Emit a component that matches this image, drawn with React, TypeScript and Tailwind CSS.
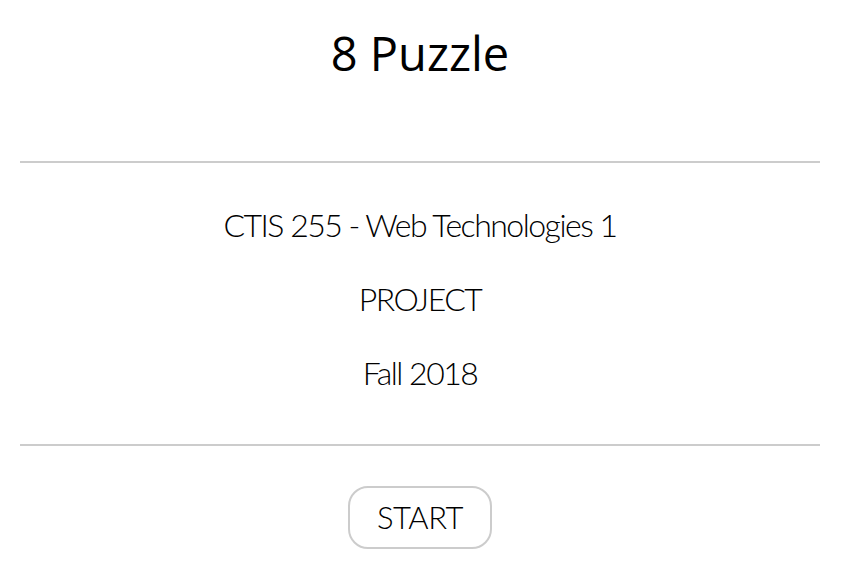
export default function App() {
  return (
    <div className="min-h-screen bg-white text-black">
      <div className="flex w-[840px] flex-col items-center">
        <h1 className="mt-[23px] text-[47px] leading-[60px] font-['Open_Sans',sans-serif]">8 Puzzle</h1>
        <hr className="mt-[78px] w-[800px] border-0 border-t-2 border-[#cccccc]" />
        <div className="mt-[25px] flex flex-col items-center text-[32px] leading-[74px] font-light tracking-[-1.5px] font-['Lato',sans-serif]">
          <p>CTIS 255 - Web Technologies 1</p>
          <p>PROJECT</p>
          <p>Fall 2018</p>
        </div>
        <hr className="mt-[34px] w-[800px] border-0 border-t-2 border-[#cccccc]" />
        <button className="mt-[40px] h-[63px] w-[144px] rounded-[20px] border-2 border-[#cccccc] bg-white text-[31px] font-light tracking-[-0.5px] font-['Lato',sans-serif]">
          START
        </button>
      </div>
    </div>
  );
}
